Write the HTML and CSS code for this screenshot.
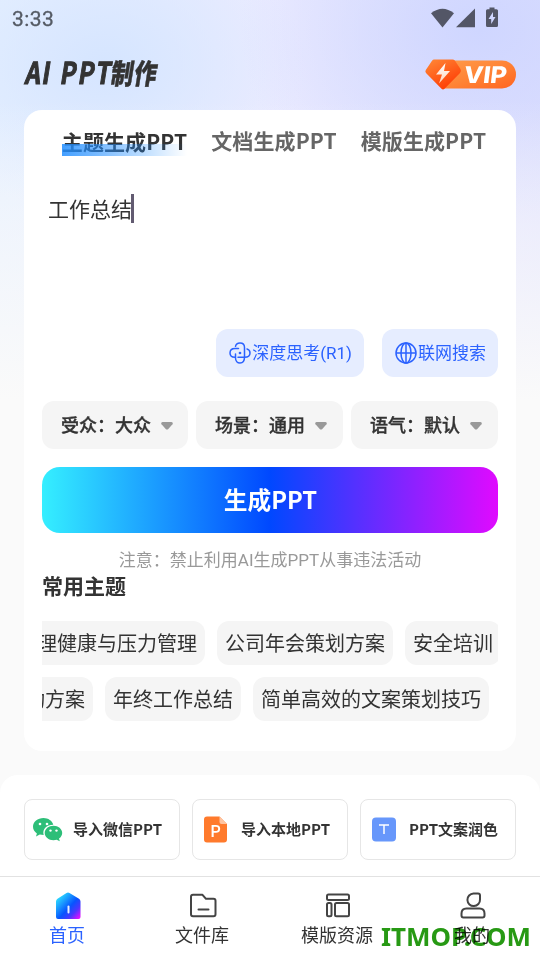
FILE: index.html
```html
<!DOCTYPE html>
<html lang="zh-CN">
<head>
<meta charset="utf-8">
<title>AI PPT制作</title>
<link rel="stylesheet" href="styles.css">
</head>
<body>
<div class="app">
  <header class="status">
    <span class="clock">3:33</span>
    <svg class="status-icons" width="68" height="22" viewBox="0 0 68 22">
      <path d="M1 5.200Q12.500-3.800 24 5.200L12.500 19.500Z"/>
      <path d="M45 0.500V19.300H26Z"/>
      <path fill-rule="evenodd" d="M59.500 -.5h5v1.700h2a1.500 1.500 0 0 1 1.500 1.500V17.500a1.500 1.500 0 0 1-1.500 1.500h-9A1.500 1.500 0 0 1 56 17.500V2.700a1.500 1.500 0 0 1 1.500-1.500h2ZM63 4l-4.500 7h2.700v5l4.300-7H63Z"/>
    </svg>
  </header>
  <div class="titlebar">
    <svg class="logo" width="140" height="36" viewBox="0 0 140 36">
      <g transform="translate(0 29) skewX(-9)">
        <text class="logo-latin" transform="scale(.8 1)" x="0" y="-1" textLength="31">AI</text>
        <text class="logo-latin" transform="scale(.8 1)" x="44" y="-1" textLength="63">PPT</text>
        <text class="logo-cjk" transform="scale(.8 1)" x="107" y="-1" textLength="57">制作</text>
      </g>
    </svg>
    <svg class="vip" width="92" height="32" viewBox="0 0 92 32">
      <defs>
        <linearGradient id="pill" x1="0" y1="0" x2="1" y2="1"><stop offset="0" stop-color="#ff9c4b"/><stop offset=".5" stop-color="#ff8436"/><stop offset="1" stop-color="#ff6420"/></linearGradient>
        <linearGradient id="gem" x1="0" y1="0" x2=".6" y2="1"><stop offset="0" stop-color="#ff8a38"/><stop offset="1" stop-color="#ff3d05"/></linearGradient>
        <linearGradient id="spark" x1="0" y1="0" x2="0" y2="1"><stop offset="0" stop-color="#fff"/><stop offset="1" stop-color="#ffd5bc"/></linearGradient>
      </defs>
      <path d="M18 1.500H77a14 14 0 0 1 0 28H18Z" fill="url(#pill)"/>
      <path d="M9 0.500H27.500Q29 0.500 30 1.700L35.500 10Q36.500 12 35 14L19.500 29.800Q18 31 16.500 29.800L1 14Q-.2 12.500.8 11L7 1.700Q8 .5 9 .5Z" fill="url(#gem)"/>
      <path d="M20.500 4L11 15.500h6L14 24.500 25 12h-6Z" fill="url(#spark)"/>
      <text class="vip-text" transform="translate(38 23.500) skewX(-7)" textLength="43" lengthAdjust="spacingAndGlyphs">VIP</text>
    </svg>
  </div>

  <main class="card">
    <nav class="tabs">
      <span class="tab active">主题生成PPT</span>
      <span class="tab">文档生成PPT</span>
      <span class="tab">模版生成PPT</span>
    </nav>
    <div class="editor"><span>工作总结</span><i class="caret"></i></div>
    <div class="modes">
      <button class="mode">
        <svg width="22" height="22" viewBox="0 0 22 22" fill="none" stroke="#2b62ff" stroke-width="1.500" stroke-linecap="round">
          <path d="M6.500 4.300C7 2 9 1 11 1c3 0 4.500 2 4.500 4.500V15c0 4-2 6-4.500 6s-4.500-2-4.500-5V12"/>
          <path d="M9.500 6.500H6C3 6.500 1 8.200 1 11s2 4.300 5 4.300"/>
          <path d="M9 15.300h6.500c3.500 0 5.500-1.800 5.500-4.300 0-2-1-3.500-3-4"/>
          <circle cx="11" cy="11" r=".6"/>
        </svg><span>深度思考(R1)</span>
      </button>
      <button class="mode">
        <svg width="22" height="22" viewBox="0 0 22 22" fill="none" stroke="#2b62ff" stroke-width="1.500">
          <circle cx="11" cy="11" r="10"/><ellipse cx="11" cy="11" rx="5" ry="10"/><path d="M11 1v20M1 11h20"/>
        </svg><span>联网搜索</span>
      </button>
    </div>
    <div class="filters">
      <button class="filter"><span>受众：大众</span><svg width="12" height="8" viewBox="0 0 12 8"><path d="M1.500 0h9q2 .6 1 2.200L7.300 7q-1.300 1-2.600 0L.5 2.200Q-.5.600 1.500 0Z"/></svg></button>
      <button class="filter"><span>场景：通用</span><svg width="12" height="8" viewBox="0 0 12 8"><path d="M1.500 0h9q2 .6 1 2.200L7.300 7q-1.300 1-2.600 0L.5 2.200Q-.5.600 1.500 0Z"/></svg></button>
      <button class="filter"><span>语气：默认</span><svg width="12" height="8" viewBox="0 0 12 8"><path d="M1.500 0h9q2 .6 1 2.200L7.300 7q-1.300 1-2.600 0L.5 2.200Q-.5.600 1.500 0Z"/></svg></button>
    </div>
    <button class="generate">生成PPT</button>
    <p class="notice">注意：禁止利用AI生成PPT从事违法活动</p>
    <h2 class="section">常用主题</h2>
    <div class="topics">
      <div class="topic-row first"><span>心理健康与压力管理</span><span>公司年会策划方案</span><span>安全培训</span></div>
      <div class="topic-row second"><span>活动方案</span><span>年终工作总结</span><span>简单高效的文案策划技巧</span></div>
    </div>
  </main>

  <section class="imports">
    <button class="import">
      <svg width="30" height="26" viewBox="0 0 30 26">
        <path fill="#2dbe78" d="M10.500 2C4.700 2 0 5.900 0 10.700c0 2.700 1.500 5 3.900 6.700L3 20.500l3.800-1.900c1.200.3 2.500.5 3.900.5C9 13 13.500 8.700 20.300 8.700 19.200 4.800 15.200 2 10.500 2Z"/>
        <path fill="#2dbe78" d="M20.500 9.800c-4.900 0-8.800 3.200-8.800 7.200s3.900 7.200 8.800 7.200c1.100 0 2.200-.2 3.200-.5l3.100 1.600-.8-2.800c2-1.300 3.200-3.300 3.200-5.500 0-4-3.900-7.200-8.700-7.200Z"/>
        <g fill="#fff"><circle cx="7" cy="8" r="1.300"/><circle cx="14" cy="8" r="1.300"/><circle cx="17.500" cy="14.600" r="1.200"/><circle cx="23.500" cy="14.600" r="1.200"/></g>
      </svg><span>导入微信PPT</span>
    </button>
    <button class="import">
      <svg width="30" height="26" viewBox="0 0 30 26">
        <path fill="#ff7a2c" d="M6 0.500H18.500L26 8V23.500a3 3 0 0 1-3 3H6a3 3 0 0 1-3-3V3.500a3 3 0 0 1 3-3Z"/>
        <path fill="#ffc4a0" d="M18.500 0.500 26 8H20.500a2 2 0 0 1-2-2Z"/>
        <text class="doc-letter" x="9.500" y="20.500">P</text>
      </svg><span>导入本地PPT</span>
    </button>
    <button class="import">
      <svg width="30" height="26" viewBox="0 0 30 26">
        <rect x="3" y="1.500" width="24" height="24" rx="4" fill="#6797fb"/><path d="M10 9h10M15 9V18" stroke="#fff" stroke-width="1.500" fill="none"/>
      </svg><span>PPT文案润色</span>
    </button>
  </section>

  <nav class="bottom">
    <a class="item current">
      <svg width="28" height="28" viewBox="0 0 28 28"><defs><linearGradient id="home" x1="0" y1="0" x2="1" y2="1"><stop offset=".1" stop-color="#2ee6ff"/><stop offset=".55" stop-color="#0754ff"/><stop offset=".75" stop-color="#4b37ff"/><stop offset=".95" stop-color="#e010ff"/></linearGradient></defs><path d="M12.500 1Q14 0 15.500 1L25 6.800Q26.500 7.700 26.500 9.500V25q0 2-2 2H4q-2 0-2-2V9.500Q2 7.700 3.500 6.800Z" fill="url(#home)"/><path d="M14.500 14.500v6" stroke="#e5efff" stroke-width="2" stroke-linecap="round"/></svg>
      <span>首页</span>
    </a>
    <a class="item">
      <svg width="28" height="28" viewBox="0 0 28 28" fill="none" stroke="#444" stroke-width="2" stroke-linejoin="round" stroke-linecap="round"><path d="M4 2.800h9.500l3.500 4H24.500q2 0 2 2V22.300q0 2-2 2H4q-2 0-2-2V4.800q0-2 2-2Z"/><path d="M9.500 17.500h10"/></svg>
      <span>文件库</span>
    </a>
    <a class="item">
      <svg width="28" height="28" viewBox="0 0 28 28" fill="none" stroke="#444" stroke-width="2"><rect x="3" y="2.500" width="22" height="5.500" rx="1.500"/><rect x="3" y="11" width="4.500" height="13.300" rx="1.500"/><rect x="11" y="11" width="14" height="13.300" rx="1.500"/></svg>
      <span>模版资源</span>
    </a>
    <a class="item">
      <svg width="28" height="28" viewBox="0 0 28 28" fill="none" stroke="#444" stroke-width="2"><path d="M14.500 1.500H19q2 0 2 2V7.500a6.300 6.300 0 1 1-6.500-6Z"/><path d="M7.500 16.500h13q5 0 5 5V23.500q0 2-2 2H4.500q-2 0-2-2V21.500q0-5 5-5Z"/></svg>
      <span>我的</span>
    </a>
  </nav>
  <svg class="watermark" width="152" height="28" viewBox="0 0 152 28"><text x="0" y="21" textLength="150" lengthAdjust="spacingAndGlyphs">ITMOP.COM</text></svg>
</div>
</body>
</html>
```
FILE: styles.css
```css
* { box-sizing: border-box; }
body { margin: 0; font-family: Roboto, "Noto Sans CJK SC", sans-serif; color: #333; }
button { border: 0; padding: 0; margin: 0; font: inherit; color: inherit; white-space: nowrap; }
.app {
  position: relative; width: 540px; height: 960px; overflow: hidden;
  display: flex; flex-direction: column;
  background:
    linear-gradient(180deg, rgba(250,250,250,0) 100px, rgba(250,250,250,.5) 225px, #fafafa 400px),
    radial-gradient(ellipse 240px 190px at 480px 30px, #cfd6ff 0%, rgba(208,214,255,0) 100%),
    radial-gradient(ellipse 200px 150px at 105px 65px, #d5e5ff 0%, rgba(213,229,255,0) 100%),
    linear-gradient(90deg, #e6f0ff 0%, #ebebff 50%, #dfe0fe 100%);
}
.status { height: 38px; padding: 7px 42px 0 12px; display: flex; justify-content: space-between; align-items: flex-start; }
.clock { font-size: 21px; line-height: 24px; color: #555b65; letter-spacing: .4px; -webkit-text-stroke: .3px #555b65; }
.status-icons { fill: #535666; margin-top: 1px; overflow: visible; }
.titlebar { height: 72px; padding: 18px 24px 0; display: flex; justify-content: space-between; align-items: flex-start; }
.logo { overflow: visible; fill: #333; }
.logo-latin { font: 700 30px "Noto Sans CJK SC", sans-serif; stroke: #333; stroke-width: 1.1px; }
.logo-cjk { font: 900 28px "Noto Sans CJK SC", sans-serif; stroke: #333; stroke-width: .5px; }
.vip { margin: 3px -1px 0 0; overflow: visible; }
.vip-text { font: 800 23px Inter, sans-serif; fill: #fff; }

.card { height: 641px; margin: 0 24px; padding: 0 18px; border-radius: 18px; background: #fff; display: flex; flex-direction: column; }
.tabs { display: flex; justify-content: center; gap: 24px; padding: 16px 0 0 8px; height: 73px; }
.tab { position: relative; height: 29px; font: 700 21px/29px "Noto Sans CJK SC", sans-serif; letter-spacing: .1px; color: #666; white-space: nowrap; }
.tab.active { color: #333; padding-top: 1px; }
.tab.active::after { content: ""; position: absolute; left: 0; right: 0; top: 18px; height: 12px; background: linear-gradient(90deg, rgba(34,142,255,.85), rgba(34,142,255,0)); }
.editor { height: 146px; padding: 11px 6px; display: flex; font-size: 21px; line-height: 32px; }
.caret { width: 3px; height: 29px; background: #625b71; margin-left: -1px; }
.modes { display: flex; justify-content: flex-end; gap: 18px; }
.mode { height: 48px; padding: 0 12px 0 13px; border-radius: 12px; background: #e6edff; color: #2b62ff; display: flex; align-items: center; gap: 1px; font-size: 17px; }
.mode span { margin-top: -3px; }
.filters { display: grid; grid-template-columns: 146px 147px 147px; gap: 8px; margin-top: 24px; }
.filter { height: 48px; border-radius: 12px; background: #f5f5f5; display: flex; align-items: center; gap: 10px; padding-left: 19px; font-size: 18px; font-weight: 500; }
.filter span { margin-top: -2px; -webkit-text-stroke: .35px #333; }
.filter svg { fill: #999; margin-top: 1px; }
.generate { height: 66px; margin-top: 18px; border-radius: 18px; background: linear-gradient(90deg, #35efff, #0048ff 50%, #e00aff); color: #fff; font: 700 23.700px/64px "Noto Sans CJK SC", sans-serif; padding: 0 0 2px 1px; }
.notice { margin: 14px 0 0; height: 26px; line-height: 26px; font-size: 17px; text-align: center; color: #999; }
.section { margin: 0; height: 30px; font-size: 21px; line-height: 28px; font-weight: 700; }
.topics { margin-top: 18px; overflow: hidden; display: flex; flex-direction: column; gap: 12px; }
.topic-row { display: flex; gap: 12px; }
.topic-row span { flex: none; height: 44px; padding: 0 8px; border-radius: 12px; background: #f5f5f5; font-size: 20px; line-height: 46px; }
.first { margin-left: -33px; }
.second { margin-left: -45px; }

.imports { height: 101px; margin-top: 24px; padding: 24px; display: grid; grid-template-columns: repeat(3, 1fr); gap: 12px; background: #fff; border-radius: 18px 18px 0 0; }
.import { height: 61px; border: 1px solid #e6e6e6; border-radius: 8px; background: #fff; display: flex; align-items: center; gap: 10px; padding: 0 0 1px 8px; font: 700 15px "Noto Sans CJK SC", sans-serif; }
.import svg { overflow: visible; }
.import span { margin-top: -1px; }
.doc-letter { font: 500 16px Roboto, sans-serif; fill: #fff; }
.bottom { height: 84px; border-top: 1px solid #e2e2e2; background: #fff; display: grid; grid-template-columns: repeat(4, 1fr); padding-top: 15px; }
.item { display: flex; flex-direction: column; align-items: center; font-size: 18px; line-height: 28px; color: #333; margin-left: -1px; }
.item svg { margin-left: 1px; }
.item span { margin-top: 2px; }
.current { color: #2b62ff; }
.watermark { position: absolute; left: 381px; top: 925px; mix-blend-mode: multiply; overflow: visible; font: 700 25px "Noto Sans", sans-serif; fill: #279914; }
```
